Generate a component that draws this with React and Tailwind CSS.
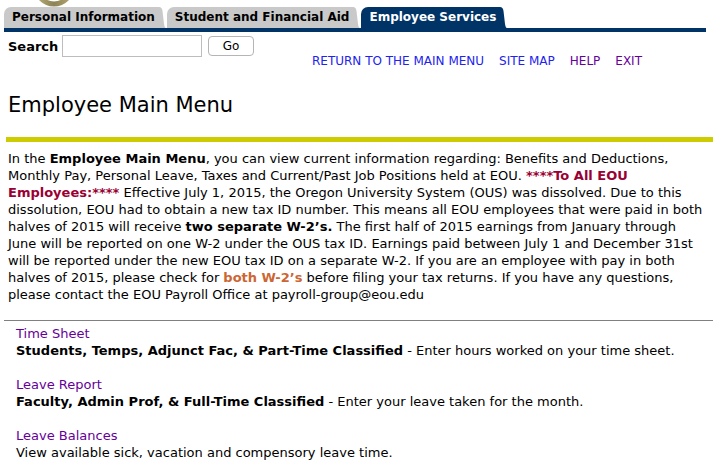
function Tab({ label, active = false }) {
  const bg = active ? '#003366' : '#c9c9c9'
  return (
    <div className="flex items-end">
      <div
        className={`h-[21px] rounded-tl-[7px] pl-[8px] pr-[2px] flex items-center font-bold text-[12px] ${
          active ? 'bg-[#003366] text-white' : 'bg-[#c9c9c9] text-black'
        }`}
      >
        {label}
      </div>
      <svg width="9" height="21" viewBox="0 0 9 21" className="block">
        <path d="M0 0 L2 0 C4 0 5 1 5.5 4 L7 17 C7.5 19.5 8 21 9 21 L0 21 Z" fill={bg} />
      </svg>
    </div>
  )
}

function MenuItem({ title, lead, rest }) {
  return (
    <div className="mb-[17px]">
      <a className="text-[#660099] block">{title}</a>
      <div>
        {lead && <b>{lead}</b>}
        {rest}
      </div>
    </div>
  )
}

export default function App() {
  return (
    <div className="w-[719px] h-[475px] overflow-hidden bg-white text-black font-['DejaVu_Sans',Verdana,sans-serif] text-[13px] leading-[17px]">
      {/* logo remnant */}
      <div className="h-[7px] pl-[31px] overflow-hidden">
        <svg width="46" height="7" viewBox="0 0 46 7" className="block">
          <defs>
            <linearGradient id="ring" x1="0" x2="1">
              <stop offset="0" stopColor="#b9ad78" />
              <stop offset="0.5" stopColor="#8d8254" />
              <stop offset="1" stopColor="#b3a873" />
            </linearGradient>
          </defs>
          <circle cx="23" cy="-14" r="18" fill="none" stroke="url(#ring)" strokeWidth="5" />
        </svg>
      </div>

      {/* tabs */}
      <div className="flex items-end gap-[1px] pl-[4px]">
        <Tab label="Personal Information" />
        <Tab label="Student and Financial Aid" />
        <Tab label="Employee Services" active />
      </div>
      <div className="h-[4px] w-[702px] ml-[4px] bg-[#003366]" />

      {/* search + links */}
      <div className="flex items-start h-[60px]">
        <div className="flex items-center mt-[3px] pl-[8px]">
          <span className="font-bold w-[54px]">Search</span>
          <input className="w-[140px] h-[22px] border border-[#bdbdbd] bg-white outline-none" />
          <button className="ml-[6px] w-[46px] h-[20px] border border-[#b5b5b5] rounded-[4px] bg-white text-[12px] leading-none">
            Go
          </button>
        </div>
        <div className="flex gap-[15px] ml-[58px] mt-[21px] text-[12px]">
          <a className="text-[#2222ee]">RETURN TO THE MAIN MENU</a>
          <a className="text-[#2222ee]">SITE MAP</a>
          <a className="text-[#660099]">HELP</a>
          <a className="text-[#660099]">EXIT</a>
        </div>
      </div>

      <h1 className="pl-[8px] text-[21px] leading-[26px]">Employee Main Menu</h1>

      <div className="h-[5px] w-[707px] ml-[6px] mt-[19px] bg-[#cccc00]" />

      <p className="pl-[8px] mt-[8px] whitespace-nowrap">
        In the <b>Employee Main Menu</b>, you can view current information regarding: Benefits and Deductions,
        <br />
        Monthly Pay, Personal Leave, Taxes and Current/Past Job Positions held at EOU.{' '}
        <b className="text-[#990033]">****To All EOU</b>
        <br />
        <b className="text-[#990033]">Employees:****</b> Effective July 1, 2015, the Oregon University System (OUS) was dissolved. Due to this
        <br />
        dissolution, EOU had to obtain a new tax ID number. This means all EOU employees that were paid in both
        <br />
        halves of 2015 will receive <b>two separate W-2’s.</b> The first half of 2015 earnings from January through
        <br />
        June will be reported on one W-2 under the OUS tax ID. Earnings paid between July 1 and December 31st
        <br />
        will be reported under the new EOU tax ID on a separate W-2. If you are an employee with pay in both
        <br />
        halves of 2015, please check for <b className="text-[#cc6633]">both W-2’s</b> before filing your tax returns. If you have any questions,
        <br />
        please contact the EOU Payroll Office at payroll-group@eou.edu
      </p>

      <div className="h-[1px] w-[709px] ml-[4px] mt-[17px] bg-[#808080]" />

      <div className="pl-[16px] pt-[4px]">
        <MenuItem
          title="Time Sheet"
          lead="Students, Temps, Adjunct Fac, & Part-Time Classified"
          rest=" - Enter hours worked on your time sheet."
        />
        <MenuItem
          title="Leave Report"
          lead="Faculty, Admin Prof, & Full-Time Classified"
          rest=" - Enter your leave taken for the month."
        />
        <MenuItem title="Leave Balances" rest="View available sick, vacation and compensory leave time." />
      </div>
    </div>
  )
}
